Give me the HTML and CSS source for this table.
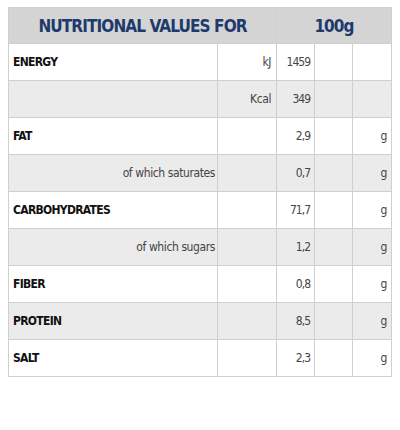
FILE: index.html
```html
<!DOCTYPE html>
<html lang="en">
<head>
    <meta charset="UTF-8">
    <title>Nutritional values</title>
    <link rel="stylesheet" href="styles.css">
</head>
<body>
    <table class="nutrition">
        <colgroup>
            <col class="c-name">
            <col class="c-unit">
            <col class="c-val">
            <col class="c-empty">
            <col class="c-g">
        </colgroup>
        <thead>
            <tr>
                <th colspan="2">NUTRITIONAL VALUES FOR</th>
                <th colspan="3">100g</th>
            </tr>
        </thead>
        <tbody>
            <tr>
                <td class="name">ENERGY</td>
                <td class="unit">kJ</td>
                <td class="val">1459</td>
                <td></td>
                <td></td>
            </tr>
            <tr class="alt">
                <td></td>
                <td class="unit">Kcal</td>
                <td class="val">349</td>
                <td></td>
                <td></td>
            </tr>
            <tr>
                <td class="name">FAT</td>
                <td></td>
                <td class="val">2,9</td>
                <td></td>
                <td class="g">g</td>
            </tr>
            <tr class="alt">
                <td class="sub">of which saturates</td>
                <td></td>
                <td class="val">0,7</td>
                <td></td>
                <td class="g">g</td>
            </tr>
            <tr>
                <td class="name">CARBOHYDRATES</td>
                <td></td>
                <td class="val">71,7</td>
                <td></td>
                <td class="g">g</td>
            </tr>
            <tr class="alt">
                <td class="sub">of which sugars</td>
                <td></td>
                <td class="val">1,2</td>
                <td></td>
                <td class="g">g</td>
            </tr>
            <tr>
                <td class="name">FIBER</td>
                <td></td>
                <td class="val">0,8</td>
                <td></td>
                <td class="g">g</td>
            </tr>
            <tr class="alt">
                <td class="name">PROTEIN</td>
                <td></td>
                <td class="val">8,5</td>
                <td></td>
                <td class="g">g</td>
            </tr>
            <tr>
                <td class="name">SALT</td>
                <td></td>
                <td class="val">2,3</td>
                <td></td>
                <td class="g">g</td>
            </tr>
        </tbody>
    </table>
</body>
</html>
```

FILE: styles.css
```css
body {
    margin: 7px 8px;
    background-color: #fff;
    font-family: "DejaVu Sans Condensed", "Liberation Sans", sans-serif;
    color: #222;
}
.nutrition {
    width: 384px;
    border-collapse: collapse;
    table-layout: fixed;
}
.c-name { width: 209px; }
.c-unit { width: 59px; }
.c-val { width: 38px; }
.c-empty { width: 38px; }
.c-g { width: 39px; }
.nutrition th,
.nutrition td {
    border: 1px solid #cfcfcf;
    padding: 0;
}
.nutrition th {
    height: 35px;
    background-color: #d4d4d4;
    color: #1d3a6b;
    font-size: 17px;
    font-weight: bold;
    letter-spacing: -0.9px;
    text-align: center;
}
.nutrition td {
    height: 36px;
    font-size: 12px;
    color: #444;
    letter-spacing: -0.4px;
}
.alt td {
    background-color: #ebebeb;
}
.name {
    padding-left: 4px !important;
    font-weight: bold;
    letter-spacing: -0.7px !important;
    color: #111 !important;
}
.sub {
    text-align: right;
    padding-right: 2px !important;
}
.unit {
    text-align: right;
    padding-right: 5px !important;
}
.val {
    text-align: right;
    padding-right: 4px !important;
    letter-spacing: -1px !important;
}
.g {
    text-align: right;
    padding-right: 4px !important;
}
```
